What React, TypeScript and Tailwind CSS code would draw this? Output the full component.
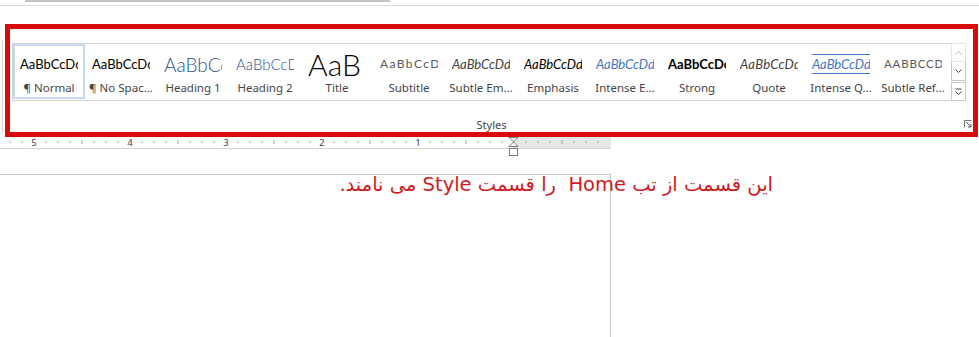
import React from "react";

type Item = {
  preview: string;
  label: string;
  cls: string;
  selected?: boolean;
  iq?: boolean;
};

const items: Item[] = [
  { preview: "AaBbCcDc", label: "¶ Normal", cls: "text-[13px] text-black", selected: true },
  { preview: "AaBbCcDc", label: "¶ No Spac...", cls: "text-[13px] text-black" },
  { preview: "AaBbCcDd", label: "Heading 1", cls: "text-[19px] font-light text-[#2f5496]" },
  { preview: "AaBbCcDd", label: "Heading 2", cls: "text-[15px] font-light text-[#2f5496]" },
  { preview: "AaB", label: "Title", cls: "text-[30px] font-light text-black" },
  { preview: "AaBbCcDd", label: "Subtitle", cls: "text-[12px] tracking-[1.4px] text-[#595959]" },
  { preview: "AaBbCcDd", label: "Subtle Em...", cls: "text-[13px] italic text-[#404040]" },
  { preview: "AaBbCcDd", label: "Emphasis", cls: "text-[13px] italic text-black" },
  { preview: "AaBbCcDd", label: "Intense E...", cls: "text-[13px] italic text-[#4472c4]" },
  { preview: "AaBbCcDc", label: "Strong", cls: "text-[13px] font-bold text-black" },
  { preview: "AaBbCcDd", label: "Quote", cls: "text-[13px] italic tracking-[0.3px] text-[#404040]" },
  { preview: "AaBbCcDd", label: "Intense Q...", cls: "text-[13px] italic text-[#4472c4]", iq: true },
  { preview: "AABBCCDD", label: "Subtle Ref...", cls: "text-[11.5px] tracking-[0.8px] text-[#5a5a5a]" },
];

function StyleItem({ it }: { it: Item }) {
  return (
    <div
      className={
        "flex h-[55px] w-[72px] shrink-0 flex-col items-center border-2 " +
        (it.selected ? "border-[#c5d8f1]" : "border-transparent")
      }
    >
      <div className="mt-[4px] flex h-[28px] w-[58px] items-center overflow-hidden">
        {it.iq ? (
          <div className="flex h-[20px] w-[58px] items-center border-y border-[#4472c4]">
            <span className={"whitespace-nowrap leading-none " + it.cls} style={{ fontFamily: "Lato, sans-serif" }}>
              {it.preview}
            </span>
          </div>
        ) : (
          <span className={"whitespace-nowrap leading-none " + it.cls} style={{ fontFamily: "Lato, sans-serif" }}>
            {it.preview}
          </span>
        )}
      </div>
      <div className="mt-[2px] flex h-[16px] items-center whitespace-nowrap text-[11.5px] leading-none text-[#444]" style={{ fontFamily: "'Noto Sans', sans-serif" }}>
        {it.label}
      </div>
    </div>
  );
}

function Ruler() {
  const ticks: React.ReactNode[] = [];
  for (let n = -8; n <= 42; n++) {
    const x = 514 - 12 * n;
    if (x < 0 || x > 610) continue;
    if (n === 0) continue;
    const mod = ((n % 8) + 8) % 8;
    if (mod === 0) continue;
    if (mod === 4) {
      ticks.push(<rect key={n} x={x - 0.5} y={4} width={1} height={4} fill="#9a9a9a" />);
    } else {
      ticks.push(<rect key={n} x={x - 0.5} y={5} width={1} height={2} fill="#a8a8a8" />);
    }
  }
  const nums = [5, 4, 3, 2, 1];
  return (
    <svg width="611" height="20" className="block">
      <rect x={0} y={1} width={611} height={11} fill="#ffffff" />
      <rect x={513} y={1} width={98} height={11} fill="#e6e6e6" />
      <rect x={0} y={12} width={611} height={1} fill="#d4d4d4" />
      {ticks}
      {nums.map((v) => (
        <text
          key={v}
          x={514 - 96 * v}
          y={10}
          fontSize="9.5"
          textAnchor="middle"
          fill="#444"
          fontFamily="'Noto Sans', sans-serif"
        >
          {v}
        </text>
      ))}
      <path d="M509 1.5 L518 1.5 L513.5 6 L518 10.5 L509 10.5 L513.5 6 Z" fill="#fff" stroke="#7a7a7a" strokeWidth="1" />
      <rect x={509.5} y={12.5} width={8} height={7} fill="#fff" stroke="#7a7a7a" strokeWidth="1" />
    </svg>
  );
}

export default function App() {
  return (
    <div className="relative h-[337px] w-[979px] overflow-hidden bg-white">
      {/* top strip */}
      <div className="relative h-[24px] w-full">
        <div className="ml-[25px] h-[2px] w-[365px] bg-[#c4c4c4]" />
        <div className="mt-[3px] h-[1px] w-full bg-[#dcdcdc]" />
      </div>

      {/* left faint line */}
      <div className="absolute left-[2px] top-[40px] h-[92px] w-[1px] bg-[#d8d8d8]" />

      {/* ribbon with red frame */}
      <div className="ml-[5px] h-[113px] w-[973px] border-[5px] border-[#d80a0a]">
        <div className="ml-[2px] mt-[14px] flex">
          <div className="flex h-[58px] w-[939px] border-y border-l border-[#d5d5d5] bg-white">
            {items.map((it) => (
              <StyleItem key={it.label} it={it} />
            ))}
          </div>
          <div className="flex h-[58px] w-[15px] flex-col">
            <div className="flex h-[19px] items-center justify-center border border-[#e3e3e3]">
              <svg width="7" height="4" viewBox="0 0 7 4"><path d="M0.5 3.5 L3.5 0.5 L6.5 3.5" fill="none" stroke="#b5b5b5" strokeWidth="1" /></svg>
            </div>
            <div className="flex h-[19px] items-center justify-center border border-t-0 border-[#c8c8c8]">
              <svg width="7" height="4" viewBox="0 0 7 4"><path d="M0.5 0.5 L3.5 3.5 L6.5 0.5" fill="none" stroke="#444" strokeWidth="1" /></svg>
            </div>
            <div className="mt-[1px] flex h-[19px] items-center justify-center border border-[#c8c8c8]">
              <svg width="7" height="7" viewBox="0 0 7 7">
                <path d="M0.5 1 L6.5 1" stroke="#444" strokeWidth="1" />
                <path d="M0.5 3.5 L3.5 6.5 L6.5 3.5" fill="none" stroke="#444" strokeWidth="1" />
              </svg>
            </div>
          </div>
        </div>
        <div className="relative mt-[16px] flex h-[14px] items-center justify-center">
          <span className="text-[11px] leading-none text-[#444]" style={{ fontFamily: "'Noto Sans', sans-serif" }}>
            Styles
          </span>
          <svg className="absolute right-[1px] top-[3px]" width="8" height="8" viewBox="0 0 8 8">
            <path d="M0.5 0.5 L7.5 0.5 M0.5 0.5 L0.5 7.5" stroke="#777" strokeWidth="1" fill="none" />
            <path d="M2 2 L7 7 M4 7 L7 7 L7 4" stroke="#555" strokeWidth="1" fill="none" />
          </svg>
        </div>
      </div>

      {/* ruler */}
      <div className="-mt-[1px]">
        <Ruler />
      </div>

      {/* page */}
      <div className="mt-[18px] h-[200px] w-[611px] border-r border-t border-[#c6c6c6]" />

      {/* annotation */}
      <div
        dir="rtl"
        className="absolute right-[206px] top-[172px] whitespace-nowrap text-[19.5px] leading-[26px] text-[#d11a1c]"
        style={{ fontFamily: "'DejaVu Sans', 'Liberation Sans', sans-serif" }}
      >
        این قسمت از تب Home&nbsp; را قسمت Style می نامند.
      </div>
    </div>
  );
}
